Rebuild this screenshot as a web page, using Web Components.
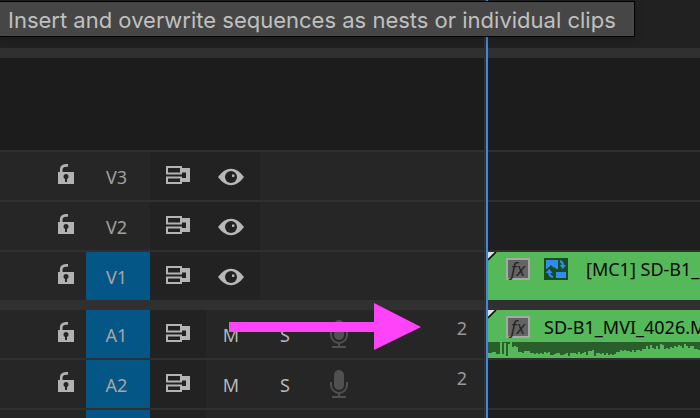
<!DOCTYPE html>
<html lang="en">
<head>
<meta charset="utf-8">
<title>Timeline</title>
<style>
html,body{margin:0;height:100%;background:#1d1d1d}
body{overflow:hidden;font-family:"Noto Sans","Open Sans",sans-serif;font-size:18px;line-height:24px;color:#a0a0a0}
</style>
</head>
<body>
<time-line>
  <tool-tip slot="overlay">Insert and overwrite sequences as nests or individual clips</tool-tip>
  <time-track name="V3" kind="video"></time-track>
  <time-track name="V2" kind="video"></time-track>
  <time-track name="V1" kind="video" targeted last><media-clip kind="video">[MC1] SD-B1_</media-clip></time-track>
  <track-divider></track-divider>
  <time-track name="A1" kind="audio" targeted><media-clip kind="audio">SD-B1_MVI_4026.M</media-clip></time-track>
  <time-track name="A2" kind="audio" targeted></time-track>
  <time-track kind="audio" targeted collapsed></time-track>
  <pointer-arrow slot="overlay"></pointer-arrow>
</time-line>
<script>
const define = (name, html) => customElements.define(name, class extends HTMLElement {
  connectedCallback() {
    if (this.shadowRoot) return;
    const t = document.createElement('template');
    t.innerHTML = typeof html === 'function' ? html(this) : html;
    this.attachShadow({mode: 'open'}).append(t.content.cloneNode(true));
  }
});

const icons = {
  lock: `<svg width="16" height="20" viewBox="0 0 16 20"><path d="M3.2 8V5.5Q3.4 1.6 8 1.4h2" fill="none" stroke="#b2b2b2" stroke-width="2.6"/><path d="M0 8h16v12H0z" fill="#b2b2b2"/><circle cx="8" cy="12.6" r="2.5" fill="#262626"/><path d="M7 13h2v5H7z" fill="#262626"/></svg>`,
  sync: `<svg width="24" height="18" viewBox="0 0 24 18" fill="none" stroke="#b4b4b4" stroke-width="2"><path d="M1 1h14v6.5H1zM1 11.5h14V17H1z"/><path d="M16 2h8v14h-8v-4h4V6.500h-4z" fill="#b4b4b4" stroke="none"/></svg>`,
  eye: `<svg width="26" height="18" viewBox="0 0 26 18"><path d="M0 9Q6 .8 13 .8T26 9Q20 17.2 13 17.2T0 9z" fill="#b8b8b8"/><circle cx="13" cy="9" r="6" fill="#222"/><rect x="14" y="6.500" width="2.4" height="2.4" fill="#b8b8b8"/></svg>`,
  mic: `<svg width="18" height="28" viewBox="0 0 18 28" fill="none" stroke="#505050" stroke-width="2"><rect x="4" y="0" width="10" height="20" rx="5" fill="#505050" stroke="none"/><path d="M1 12v3a8 8 0 0 0 16 0v-3M9 23v4M2 27h14"/></svg>`,
  multicam: `<svg width="24" height="22" viewBox="0 0 24 22"><path d="M0 0h24v22H0z" fill="#1a4c20"/><path d="M2 2h12v9h-2l-1-2-1 1-3-3-3 3-2 1zM12 14h10v6H12z" fill="#2f8eed"/><path d="M16 3q3 1 3 5M9 19Q5 18 5 14" fill="none" stroke="#2f8eed" stroke-width="2"/><path d="M15.5 7h6.5l-3.2 4zM1.5 15h7l-3.3-4z" fill="#2f8eed"/></svg>`
};

define('app-icon', el => `<style>:host{display:block}svg{display:block}</style>${icons[el.getAttribute('name')]}`);

define('time-line', `<style>
:host{display:flex;flex-direction:column;position:relative;height:100%;overflow:hidden}
header{height:48px;flex:none;background:#212121}
.space{height:92px;flex:none;background:#1c1c1c;border-bottom:2px solid #303030}
.playhead{position:absolute;top:0;bottom:0;left:484px;width:2px;border-left:2px solid #303030;background:#3b8add}
</style><header></header><track-divider></track-divider><div class="space"></div><slot></slot><div class="playhead"></div><slot name="overlay"></slot>`);

define('track-divider', `<style>:host{display:block;flex:none;height:10px;background:#303030}</style>`);

define('tool-tip', `<style>
:host{position:absolute;top:1px;left:-1px;box-sizing:border-box;height:36px;padding:0 18px 0 8px;border:1px solid #000;background:#464646;color:#c0c0c0;font:22px/36px Inter,sans-serif;white-space:nowrap;box-shadow:0 3px 8px rgba(0,0,0,.2)}
</style><div role="tooltip"><slot></slot></div>`);

define('pointer-arrow', `<style>:host{position:absolute;left:229px;top:303px}svg{display:block}</style>
<svg width="192" height="48" viewBox="0 0 192 48"><path d="M0 19h145V0l47 24-47 23V29H0z" fill="#ff43f8"/></svg>`);

define('time-track', el => {
  const name = el.getAttribute('name'), audio = el.getAttribute('kind') === 'audio';
  return `<style>
:host{display:grid;grid-template-columns:488px 1fr;height:48px;flex:none;border-bottom:2px solid #303030;background:#1f1f1f}
:host([last]){border-bottom:0}
.head{display:grid;grid-template-columns:86px 64px 56px 54px 50px 58px 1fr;background:#262626}
button{display:flex;align-items:center;justify-content:center;margin:0;padding:0;border:0;background:none;color:inherit;font:inherit;line-height:24px}
.lock{justify-content:flex-end;padding:0 12px 4px 0}
.target{padding:2px 3px 0 0}
:host([targeted]) .target{background:#045687;color:#a5a5a2}
.sync,.eye{background:#222}
.sync{padding-bottom:2px}
.eye{padding:2px 4px 0 0}
.mute{padding:2px 4px 0 0;color:#b8b8b8}
.solo{padding-top:2px;color:#b8b8b8}
.channels{padding:6px 21px 0 0;text-align:right;color:#999}
.lane{min-width:0;overflow:hidden}
</style>
<div class="head">${el.hasAttribute('collapsed') ? '<span></span><span class="target"></span><span class="sync"></span>' : `
<button class="lock" aria-label="Lock ${name}"><app-icon name="lock"></app-icon></button>
<button class="target">${name}</button>
<button class="sync" aria-label="Sync lock ${name}"><app-icon name="sync"></app-icon></button>
${audio ? `<button class="mute" aria-label="Mute ${name}">M</button><button class="solo" aria-label="Solo ${name}">S</button><button aria-label="Record ${name}"><app-icon name="mic"></app-icon></button><span class="channels">2</span>`
        : `<button class="eye" aria-label="Show ${name}"><app-icon name="eye"></app-icon></button>`}`}
</div><div class="lane"><slot></slot></div>`;
});

define('media-clip', el => {
  const audio = el.getAttribute('kind') === 'audio';
  const levels = [5,5,6,6,4,4,16,4,15,2,14,16,11,12,11,6,6,5,7,7,7,5,5,4,5,4,5,4,6,5,6,3,3,4,5,5,3,3,4,5,2,5,5,5,4,6,4,5,6,3,7,7,8,2,5,5,4,5,3,5,3,4,3,4,6,6,8,7,8,7,7,6,8,6,8,8,7,9,9,12,9,13,10,9,12,9,14,13,9,10,9,11,10,12,11,13,12,10,14,12,10,12,12,9,9,8];
  const wave = levels.map((h, i) => `M${i*2} ${16-h}h2v${h}h-2z`).join('');
  return `<style>
:host{display:block;position:relative;height:48px;background:#55b95a;color:#080808;overflow:hidden}
.bar{display:flex;gap:14px;padding:6px 0 0 18px;height:22px;align-items:center;white-space:nowrap}
.fx{display:flex;flex:none;align-items:center;justify-content:center;box-sizing:border-box;width:24px;height:22px;padding:0;border:2px solid #a8a8a8;background:#646464;color:#262626;font:italic 18px/18px "Noto Sans",sans-serif}
:host([kind=video]) .name{padding-left:4px}
.corner{position:absolute;left:0;top:0}
.wave{display:block;margin-top:4px;background:#285f2b}
</style>
<svg class="corner" width="9" height="9"><path d="M0 0h7L0 7z" fill="#ddd"/><path d="M8 0L0 8" stroke="#080808" stroke-width="1.6"/></svg>
<div class="bar"><button class="fx">fx</button>${audio ? '' : '<app-icon name="multicam"></app-icon>'}<span class="name"><slot></slot></span></div>
${audio ? `<svg class="wave" width="100%" height="16" shape-rendering="crispEdges"><path d="${wave}" fill="#55b95a"/></svg>` : ''}`;
});
</script>
</body>
</html>
